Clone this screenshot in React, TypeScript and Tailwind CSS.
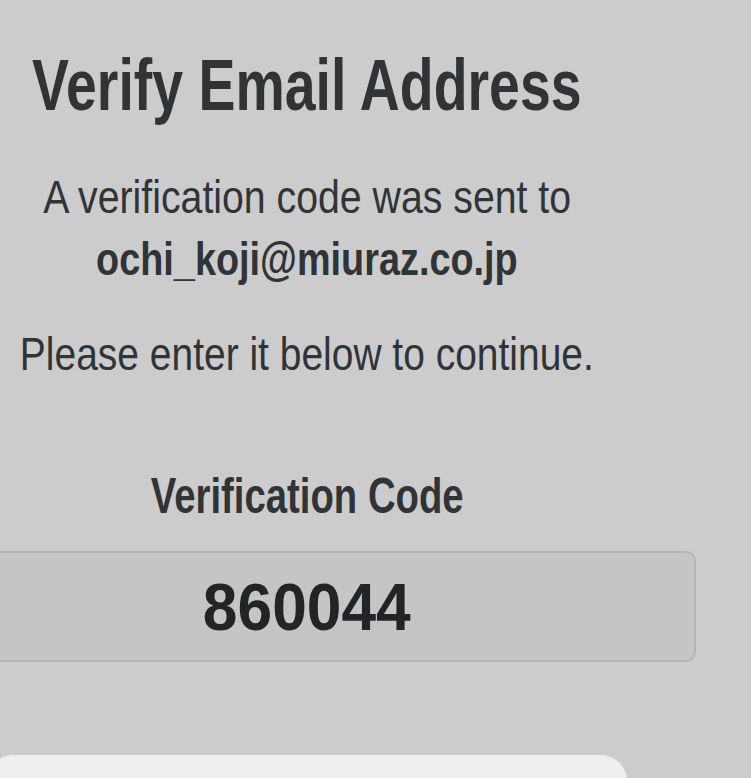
import React from 'react';

const font = "font-['Liberation_Sans',Arial,sans-serif]";

export default function App() {
  return (
    <div className={`w-[751px] h-[778px] overflow-hidden bg-[#cccccc] text-[#303437] ${font}`}>
      <div className="w-[614px] flex flex-col items-center">
        {/* Title */}
        <h1 className="mt-[49px] text-[72px] leading-none font-bold whitespace-nowrap scale-x-[0.77]">
          Verify Email Address
        </h1>

        {/* Sent-to message */}
        <div className="mt-[45px] flex flex-col items-center text-[47px] leading-[62px] whitespace-nowrap">
          <p className="scale-x-[0.835]">A verification code was sent to</p>
          <p className="font-bold scale-x-[0.805]">ochi_koji@miuraz.co.jp</p>
        </div>

        <p className="mt-[41px] text-[46px] leading-none whitespace-nowrap scale-x-[0.847]">
          Please enter it below to continue.
        </p>

        {/* Code field */}
        <label className="mt-[94px] text-[50px] leading-none font-bold whitespace-nowrap scale-x-[0.766]">
          Verification Code
        </label>

        <div className="mt-[30px] shrink-0 w-[778px] h-[111px] rounded-[10px] border-2 border-[#b4b4b4] bg-[#c5c5c5] flex items-center justify-center">
          <span className="text-[67px] leading-none font-bold text-[#222528] scale-x-[0.93]">860044</span>
        </div>

        {/* Continue button (cut off) */}
        <div className="mt-[93px] shrink-0 w-[640px] h-[80px] rounded-[26px] bg-[#eeeeec]" />
      </div>
    </div>
  );
}
